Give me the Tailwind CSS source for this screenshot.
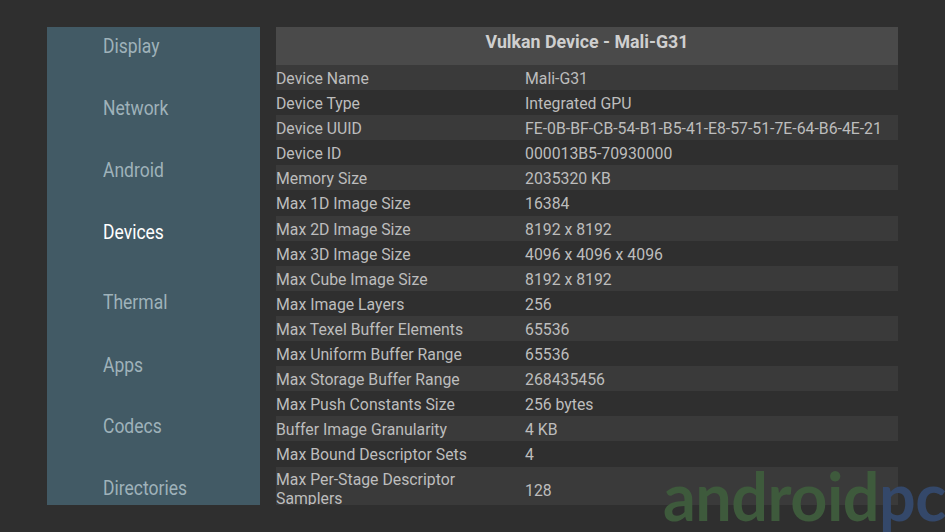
<!doctype html>
<html><head><meta charset="utf-8">
<script src="https://cdn.jsdelivr.net/npm/@tailwindcss/browser@4"></script>
</head>
<body class="m-0 bg-[#2f2f2f]">
<div class="relative flex h-[532px] w-[945px] overflow-hidden bg-[#2f2f2f] pl-[47px] pt-[27px] font-['Roboto',sans-serif]">
  <nav class="h-[478px] w-[213px] shrink-0 overflow-hidden bg-[#425a65] pl-[55.5px] text-[20px] leading-[38px] text-[#9fb2ba]">
    <ul class="flex origin-left scale-x-[0.875] flex-col">
      <li class="h-[62px]">Display</li>
      <li class="h-[62px]">Network</li>
      <li class="h-[62px]">Android</li>
      <li class="h-[70px] text-white">Devices</li>
      <li class="h-[63px]">Thermal</li>
      <li class="h-[61px]">Apps</li>
      <li class="h-[62px]">Codecs</li>
      <li class="h-[38px]">Directories</li>
    </ul>
  </nav>
  <main class="ml-4 h-[478px] w-[622px] shrink-0 overflow-hidden text-[15.8px] text-[#bdbdbd]">
    <h1 class="h-[38px] bg-[#4a4a4a] pb-[8px] text-center text-[17.8px] leading-[30px] font-bold text-[#cfcfcf]">Vulkan Device - Mali-G31</h1>
    <dl class="grid grid-cols-[249px_1fr] auto-rows-[25.1px] leading-[27px] [&>*:nth-child(4n+1)]:bg-[#3a3a3a] [&>*:nth-child(4n+2)]:bg-[#3a3a3a]">
      <dt>Device Name</dt><dd>Mali-G31</dd>
      <dt>Device Type</dt><dd>Integrated GPU</dd>
      <dt>Device UUID</dt><dd>FE-0B-BF-CB-54-B1-B5-41-E8-57-51-7E-64-B6-4E-21</dd>
      <dt>Device ID</dt><dd>000013B5-70930000</dd>
      <dt>Memory Size</dt><dd>2035320 KB</dd>
      <dt>Max 1D Image Size</dt><dd>16384</dd>
      <dt>Max 2D Image Size</dt><dd>8192 x 8192</dd>
      <dt>Max 3D Image Size</dt><dd>4096 x 4096 x 4096</dd>
      <dt>Max Cube Image Size</dt><dd>8192 x 8192</dd>
      <dt>Max Image Layers</dt><dd>256</dd>
      <dt>Max Texel Buffer Elements</dt><dd>65536</dd>
      <dt>Max Uniform Buffer Range</dt><dd>65536</dd>
      <dt>Max Storage Buffer Range</dt><dd>268435456</dd>
      <dt>Max Push Constants Size</dt><dd>256 bytes</dd>
      <dt>Buffer Image Granularity</dt><dd>4 KB</dd>
      <dt>Max Bound Descriptor Sets</dt><dd>4</dd>
      <dt class="row-span-2 pt-[3px] pr-10 leading-[19px]">Max Per-Stage Descriptor Samplers</dt><dd class="row-span-2 flex items-center pb-[3px]">128</dd>
    </dl>
  </main>
  <div class="absolute left-[663px] top-[460px] origin-left scale-x-[0.98] whitespace-nowrap font-['Lato',sans-serif] text-[66px] leading-[72px] font-bold tracking-[-0.5px]"><span class="text-[#3e5a3c]">android</span><span class="text-[#34486a]">pc</span></div>
</div>
</body></html>
